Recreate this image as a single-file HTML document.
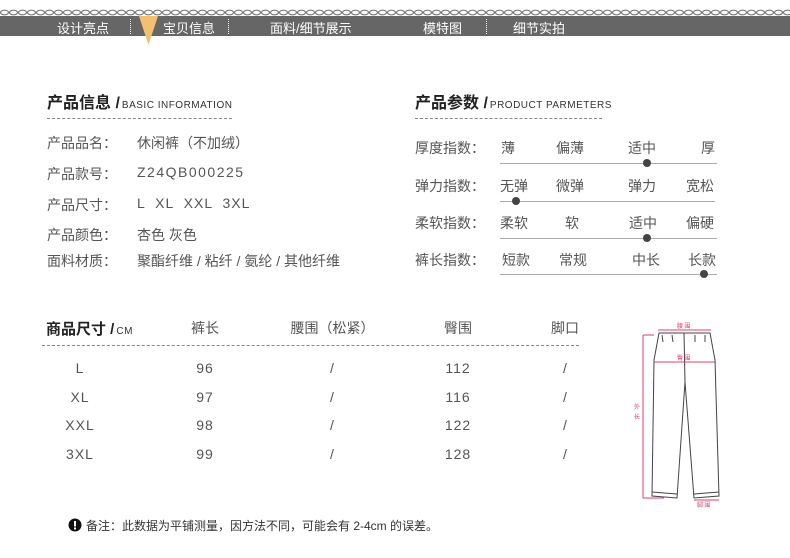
<!DOCTYPE html>
<html><head><meta charset="utf-8"><style>
*{margin:0;padding:0}
body{width:790px;height:558px;background:#fff;position:relative;overflow:hidden;font-family:"Liberation Sans","Noto Sans CJK SC",sans-serif;color:#444}
.a{position:absolute;white-space:nowrap}
.bar{position:absolute;left:0;top:16px;width:790px;height:20px;background:#666}
.nav{position:absolute;top:18px;color:#fff;font-size:13px}
.sep{position:absolute;top:19px;height:15px;border-left:1px dotted #fff}
.t{font-size:16px;font-weight:bold;color:#222}
.t small{font-family:"Liberation Sans Narrow","Liberation Sans",sans-serif;font-size:10px;font-weight:normal;color:#333;letter-spacing:0.5px;margin-left:2px}
.l{font-size:14px;color:#555}
.mono{font-family:"Liberation Sans Narrow","Liberation Sans",sans-serif;letter-spacing:1px}
.dash{position:absolute;border-top:1px dashed #888;height:0}
.sl{position:absolute;height:1px;background:#aaa}
.dot{position:absolute;width:8px;height:8px;border-radius:50%;background:#444}
.c{position:absolute;text-align:center;font-size:14px;color:#555}
</style></head><body>
<svg class="a" style="left:0;top:8px" width="790" height="9"><defs><pattern id="p" width="9" height="9" patternUnits="userSpaceOnUse"><ellipse cx="4.5" cy="4.5" rx="4" ry="2.3" fill="none" stroke="#777" stroke-width="1.2"/></pattern></defs><rect width="790" height="9" fill="url(#p)"/></svg>
<div class="bar"></div>
<div class="nav" style="left:57px">设计亮点</div>
<div class="sep" style="left:130px"></div>
<svg class="a" style="left:139px;top:16px" width="20" height="30"><polygon points="0,0 19,0 9.5,29" fill="#f2c070"/></svg>
<div class="nav" style="left:163px">宝贝信息</div>
<div class="sep" style="left:228px"></div>
<div class="nav" style="left:270px">面料/细节展示</div>
<div class="nav" style="left:423px">模特图</div>
<div class="sep" style="left:486px"></div>
<div class="nav" style="left:513px">细节实拍</div>

<div class="a t" style="left:47px;top:89px">产品信息 /<small>BASIC INFORMATION</small></div>
<div class="dash" style="left:47px;top:118px;width:185px"></div>
<div class="a l" style="left:47px;top:133px">产品品名：</div><div class="a l" style="left:137px;top:133px">休闲裤（不加绒）</div>
<div class="a l" style="left:47px;top:164px">产品款号：</div><div class="a l mono" style="left:137px;top:164px;letter-spacing:1.5px">Z24QB000225</div>
<div class="a l" style="left:47px;top:195px">产品尺寸：</div><div class="a l mono" style="left:137px;top:195px;word-spacing:5px">L XL XXL 3XL</div>
<div class="a l" style="left:47px;top:225px">产品颜色：</div><div class="a l" style="left:137px;top:225px">杏色 灰色</div>
<div class="a l" style="left:47px;top:251px">面料材质：</div><div class="a l" style="left:137px;top:251px">聚酯纤维 / 粘纤 / 氨纶 / 其他纤维</div>

<div class="a t" style="left:415px;top:89px">产品参数 /<small>PRODUCT PARMETERS</small></div>
<div class="dash" style="left:415px;top:118px;width:187px"></div>
<div class="a l" style="left:415px;top:138px">厚度指数：</div>
<div class="a l" style="left:501px;top:138px">薄</div><div class="a l" style="left:556px;top:138px">偏薄</div><div class="a l" style="left:628px;top:138px">适中</div><div class="a l" style="left:701px;top:138px">厚</div>
<div class="sl" style="left:500px;top:163px;width:217px"></div><div class="dot" style="left:643px;top:159px"></div>
<div class="a l" style="left:415px;top:176px">弹力指数：</div>
<div class="a l" style="left:500px;top:176px">无弹</div><div class="a l" style="left:556px;top:176px">微弹</div><div class="a l" style="left:628px;top:176px">弹力</div><div class="a l" style="left:686px;top:176px">宽松</div>
<div class="sl" style="left:500px;top:201px;width:215px"></div><div class="dot" style="left:512px;top:197px"></div>
<div class="a l" style="left:415px;top:213px">柔软指数：</div>
<div class="a l" style="left:500px;top:213px">柔软</div><div class="a l" style="left:565px;top:213px">软</div><div class="a l" style="left:629px;top:213px">适中</div><div class="a l" style="left:686px;top:213px">偏硬</div>
<div class="sl" style="left:500px;top:238px;width:217px"></div><div class="dot" style="left:643px;top:234px"></div>
<div class="a l" style="left:415px;top:250px">裤长指数：</div>
<div class="a l" style="left:502px;top:250px">短款</div><div class="a l" style="left:559px;top:250px">常规</div><div class="a l" style="left:632px;top:250px">中长</div><div class="a l" style="left:688px;top:250px">长款</div>
<div class="sl" style="left:500px;top:274px;width:217px"></div><div class="dot" style="left:700px;top:270px"></div>

<div class="a t" style="left:46px;top:318px;font-size:15px">商品尺寸 /<small>CM</small></div>
<div class="c" style="left:180px;top:318px;width:50px">裤长</div>
<div class="c" style="left:280px;top:318px;width:105px">腰围（松紧）</div>
<div class="c" style="left:433px;top:318px;width:50px">臀围</div>
<div class="c" style="left:540px;top:318px;width:50px">脚口</div>
<div class="dash" style="left:42px;top:345px;width:537px"></div>
<div class="c mono" style="left:55px;top:360px;width:50px">L</div><div class="c mono" style="left:180px;top:360px;width:50px">96</div><div class="c" style="left:307px;top:360px;width:50px">/</div><div class="c mono" style="left:433px;top:360px;width:50px">112</div><div class="c" style="left:540px;top:360px;width:50px">/</div>
<div class="c mono" style="left:55px;top:389px;width:50px">XL</div><div class="c mono" style="left:180px;top:389px;width:50px">97</div><div class="c" style="left:307px;top:389px;width:50px">/</div><div class="c mono" style="left:433px;top:389px;width:50px">116</div><div class="c" style="left:540px;top:389px;width:50px">/</div>
<div class="c mono" style="left:55px;top:417px;width:50px">XXL</div><div class="c mono" style="left:180px;top:417px;width:50px">98</div><div class="c" style="left:307px;top:417px;width:50px">/</div><div class="c mono" style="left:433px;top:417px;width:50px">122</div><div class="c" style="left:540px;top:417px;width:50px">/</div>
<div class="c mono" style="left:55px;top:446px;width:50px">3XL</div><div class="c mono" style="left:180px;top:446px;width:50px">99</div><div class="c" style="left:307px;top:446px;width:50px">/</div><div class="c mono" style="left:433px;top:446px;width:50px">128</div><div class="c" style="left:540px;top:446px;width:50px">/</div>

<svg class="a" style="left:620px;top:310px" width="120" height="210">
<g fill="none" stroke="#444" stroke-width="1">
<path d="M39,23 L90,23 L95,50 L99,186 L74,188 L65,72 L57,188 L32,186 L34,50 Z"/>
<path d="M64,23 L65,72"/>
<path d="M42,25 L43,32 M52,25 L53,32 M75,25 L75,32 M85,25 L85,32"/>
<path d="M32,182 L57,184 M99,182 L74,184"/>
</g>
<g stroke="#e0406a" stroke-width="1">
<line x1="38" y1="20" x2="91" y2="20"/><line x1="34" y1="52" x2="96" y2="52"/>
<line x1="23" y1="25" x2="23" y2="188"/><line x1="23" y1="25" x2="34" y2="25"/><line x1="23" y1="188" x2="44" y2="188"/>
<line x1="74" y1="190" x2="99" y2="190"/>
</g>
<g font-size="6" fill="#e0406a" font-family="Noto Sans CJK SC,sans-serif">
<text x="57" y="18">腰 围</text><text x="57" y="50">臀 围</text><text x="14" y="99">外</text><text x="14" y="109">长</text><text x="77" y="197">脚 围</text></g>
</svg>

<svg class="a" style="left:68px;top:518px" width="14" height="14"><circle cx="7" cy="7" r="6.5" fill="#111"/><rect x="6" y="3" width="2" height="5.5" fill="#fff"/><rect x="6" y="9.5" width="2" height="2" fill="#fff"/></svg>
<div class="a" style="left:86px;top:517px;font-size:12px;color:#333">备注：此数据为平铺测量，因方法不同，可能会有 2-4cm 的误差。</div>
</body></html>
